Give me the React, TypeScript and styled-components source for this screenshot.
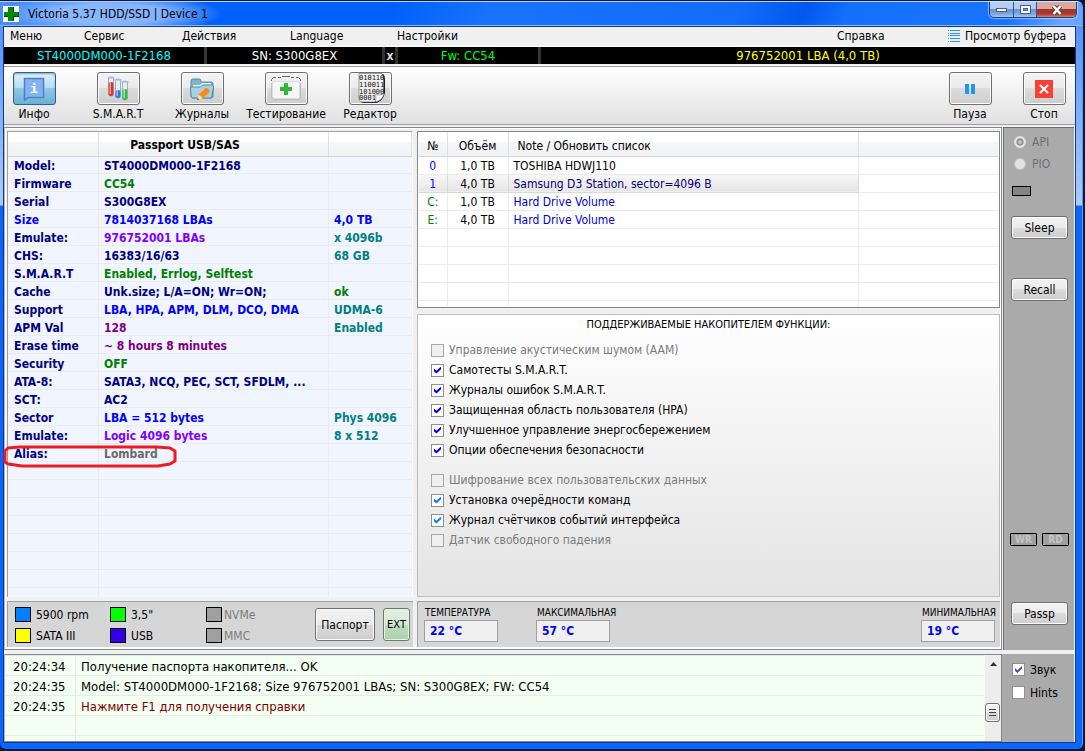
import React from "react";
import styled, { createGlobalStyle, css } from "styled-components";

const GlobalStyle = createGlobalStyle`
  * { box-sizing: border-box; }
  body {
    margin: 0;
    font-family: "DejaVu Sans Condensed", "DejaVu Sans", sans-serif;
    font-size: 12px;
    line-height: 18px;
    color: #000;
  }
  button, input { font: inherit; color: inherit; margin: 0; padding: 0; }
  table { border-collapse: collapse; border-spacing: 0; }
`;

/* ---------- window frame ---------- */

const Desktop = styled.div`
  min-height: 100vh;
  display: flex;
  padding: 1px 2px 2px 0;
  background: #02193c;
`;

const Window = styled.div`
  flex: 1;
  min-width: 0;
  display: flex;
  flex-direction: column;
  padding: 0 6px 6px 3px;
  border-top: 1px solid #b4d2ff;
  border-right: 1px solid #5c9cff;
  border-radius: 0 6px 6px 6px;
  background: linear-gradient(#4a8cf8 0, #a9cbfa 200px, #b4d2fc 203px, #0a66ff 204px, #0a66ff);
`;

const TitleBar = styled.header`
  display: flex;
  align-items: flex-start;
  justify-content: space-between;
  height: 24px;
  margin: 0 -6px 0 -3px;
  padding-left: 3px;
  border-bottom: 1px solid #8ebcff;
  border-radius: 0 6px 0 0;
  background:
    linear-gradient(115deg, transparent 0 93%, rgba(255, 255, 255, 0.35) 98%),
    linear-gradient(115deg, #4b8ffa 0, #0060fb 20%, #0060fb 36%, #1872ff 45%, #146cfd 68%, #0058ec 74%, #1470ff 78%, #1a74ff);
`;

const Title = styled.h1`
  display: flex;
  align-items: center;
  gap: 9px;
  height: 23px;
  margin: 0;
  padding-right: 20px;
  font-size: 12px;
  font-weight: normal;
  background: radial-gradient(ellipse 112px 20px at 108px 12px, rgba(160, 198, 255, 0.8) 0 50%, transparent 100%);
`;

const Caption = styled.div`
  display: flex;
  height: 16px;
  margin-right: 5px;
  border: 1px solid #20407c;
  border-top: 0;
  border-radius: 0 0 5px 5px;
  overflow: hidden;
  box-shadow: 0 0 1px 1px rgba(255, 255, 255, 0.45);
`;

const CaptionButton = styled.button<{ $close?: boolean }>`
  display: flex;
  align-items: center;
  justify-content: center;
  width: ${(p) => (p.$close ? 40 : 23)}px;
  border: 0;
  border-left: 1px solid #31548e;
  background: ${(p) =>
    p.$close
      ? "linear-gradient(#d9a9a0 0 45%, #a83228 50%, #a83a30 80%, #d88070)"
      : "linear-gradient(#b4cdf4 0 45%, #6a93d4 50%, #7ca6e6 80%, #a8c8f4)"};
  &:first-child { border-left: 0; }
`;

const Client = styled.div`
  flex: 1;
  display: flex;
  flex-direction: column;
  border: 1px solid #123a80;
  background: #f0f0f0;
`;

/* ---------- menu and drive bar ---------- */

const MenuBar = styled.nav`
  display: flex;
  align-items: center;
  height: 20px;
  padding: 0 0 2px 6px;
  border-bottom: 1px solid #fff;
`;

const MenuItem = styled.button<{ $width: number; $grow?: boolean }>`
  flex: ${(p) => (p.$grow ? "1 0" : "0 0")} ${(p) => p.$width}px;
  display: flex;
  align-items: center;
  gap: 5px;
  border: 0;
  background: none;
  text-align: left;
  white-space: nowrap;
`;

const DriveBar = styled.div`
  display: flex;
  gap: 3px;
  height: 17px;
  background: #333;
`;

const DriveCell = styled.div<{ $width?: number; $color: string }>`
  flex: ${(p) => (p.$width ? `0 0 ${p.$width}px` : "1")};
  background: #000;
  color: ${(p) => p.$color};
  font-size: 13px;
  line-height: 17px;
  text-align: center;
  white-space: nowrap;
`;

const CloseDrive = styled.button`
  flex: 0 0 10px;
  border: 0;
  background: #000;
  color: #ddd;
  font-weight: bold;
  line-height: 16px;
`;

/* ---------- toolbar ---------- */

const Toolbar = styled.div`
  display: flex;
  justify-content: space-between;
  margin-top: 2px;
  height: 59px;
  padding: 5px 1px 0 0;
  border-top: 1px solid #9a9a9a;
  border-bottom: 1px solid #a0a0a0;
  box-shadow: 0 -1px #fff;
  background: linear-gradient(#fff, #e0e0e0);
`;

const ToolGroup = styled.div<{ $gap: number }>`
  display: flex;
  gap: ${(p) => p.$gap}px;
`;

const Tool = styled.button`
  width: 60px;
  display: flex;
  flex-direction: column;
  align-items: center;
  border: 0;
  background: none;
  line-height: 18px;
  white-space: nowrap;
`;

const raised = css`
  border: 1px solid #707070;
  border-radius: 3px;
  box-shadow: inset 0 0 0 1px #fcfcfc;
  background: linear-gradient(#f3f3f3 0, #ebebeb 50%, #dcdcdc 50%, #cdcdcd);
`;

const ToolFace = styled.span<{ $active?: boolean }>`
  ${raised}
  display: flex;
  align-items: center;
  justify-content: center;
  width: 43px;
  height: 33px;
  ${(p) =>
    p.$active &&
    css`
      border-color: #2c628b;
      box-shadow: inset 0 1px 2px #7fa8c0;
      background: linear-gradient(#e0f0fa 0, #b4dcf2 50%, #8cc8ea 50%, #6cb0d8);
    `}
`;

/* ---------- main area ---------- */

const Main = styled.main`
  flex: 1;
  display: grid;
  grid-template-columns: minmax(0, 1fr) 72px;
  gap: 1px;
  margin-top: 2px;
`;

const Work = styled.div`
  display: grid;
  grid-template-columns: minmax(0, 406fr) minmax(0, 583fr);
  gap: 4px;
  padding: 3px 1px 2px 2px;
  border: 1px solid #828790;
  border-left-color: #b0b4bc;
  background: #f0f0f0;
  box-shadow: inset 1px 1px #fff, inset -1px -2px #fff;
`;

const Column = styled.section`
  min-width: 0;
  display: flex;
  flex-direction: column;
  gap: 4px;
`;

const gridLine = "#ebebeb";

const PassportBox = styled.div`
  flex: 1;
  position: relative;
  border: 1px solid #a0a0a0;
  border-right: 1px solid #fff;
  border-bottom: 0;
  background:
    linear-gradient(${gridLine}, ${gridLine}) 90px 0 / 1px 100% no-repeat,
    linear-gradient(${gridLine}, ${gridLine}) 320px 0 / 1px 100% no-repeat,
    repeating-linear-gradient(transparent 0 17px, ${gridLine} 17px 18px) 0 24px,
    #f0f5ff;
`;

const headCell = css`
  padding: 0;
  border-right: 1px solid #dedfe1;
  border-bottom: 1px solid #d5d5d5;
  background: linear-gradient(#fff 0, #fff 40%, #f5f6f7 40%, #f1f2f4);
`;

const PassportTable = styled.table`
  width: 100%;
  table-layout: fixed;
  th, td {
    height: 18px;
    padding: 0 0 0 6px;
    font-weight: bold;
    line-height: 18px;
    text-align: left;
    white-space: nowrap;
  }
  thead th {
    ${headCell}
    height: 24px;
    padding: 2px 56px 0 0;
    text-align: center;
  }
`;

const Cell = styled.td<{ $color: string }>`
  color: ${(p) => p.$color};
`;

const RowHead = styled.th<{ $color: string }>`
  color: ${(p) => p.$color};
`;

const Mark = styled.svg`
  position: absolute;
  left: -5px;
  top: 312px;
`;

const StatusBox = styled.div`
  display: flex;
  height: 46px;
  border-top: 1px solid #a0a0a0;
  border-left: 1px solid #a0a0a0;
  background: #d6d6d6;
`;

const Legend = styled.ul`
  flex: 1;
  display: grid;
  grid-template-columns: 95px 96px auto;
  grid-auto-rows: 21px;
  margin: 0;
  padding: 2px 0 0 7px;
  list-style: none;
`;

const LegendItem = styled.li<{ $color: string; $off?: boolean }>`
  display: flex;
  align-items: center;
  gap: ${(p) => (p.$off ? 2 : 5)}px;
  color: ${(p) => (p.$off ? "#7c7c7c" : "#000")};
  white-space: nowrap;
  &::before {
    content: "";
    width: 14px;
    height: 13px;
    border: 1px solid #000;
    background: ${(p) => p.$color};
  }
`;

const Buttons = styled.div`
  display: flex;
  gap: 8px;
  padding: 6px 3px 6px 0;
`;

const PushButton = styled.button<{ $width: number; $tall?: boolean; $green?: boolean }>`
  ${raised}
  width: ${(p) => p.$width}px;
  height: ${(p) => (p.$tall ? 33 : 23)}px;
  ${(p) =>
    p.$green &&
    css`
      font-size: 11px;
      border-color: #6c7c6c;
      box-shadow: inset 0 0 0 1px #e4f2e4;
      background: linear-gradient(#e4f0e4 0, #d4e8d4 50%, #c0dcc0 50%, #a8d0a8);
    `}
`;

/* ---------- drives ---------- */

const DrivesBox = styled.div`
  height: 177px;
  padding: 1px;
  border: 1px solid #828790;
  background:
    linear-gradient(${gridLine}, ${gridLine}) 29px 0 / 1px 100% no-repeat,
    linear-gradient(${gridLine}, ${gridLine}) 90px 0 / 1px 100% no-repeat,
    linear-gradient(${gridLine}, ${gridLine}) 440px 0 / 1px 100% no-repeat,
    #fff;
`;

const DrivesTable = styled.table`
  width: 100%;
  table-layout: fixed;
  th {
    ${headCell}
    height: 23px;
    padding: 3px 0 0;
    font-weight: normal;
    line-height: 18px;
    &:last-child { border-right: 0; }
  }
  td {
    height: 18px;
    padding: 2px 0 0;
    border-right: 1px solid ${gridLine};
    border-bottom: 1px solid ${gridLine};
    line-height: 15px;
    text-align: center;
    white-space: nowrap;
    &:last-child { border-right: 0; }
  }
  th:nth-child(3) { text-align: left; padding-left: 9px; }
  td:nth-child(3) { text-align: left; padding-left: 5px; }
`;

const DriveRow = styled.tr<{ $selected?: boolean }>`
  ${(p) =>
    p.$selected &&
    css`
      td:nth-child(-n + 3) {
        background: linear-gradient(#f8f8f8, #e5e5e5);
        border-color: #d9d9d9;
        border-top: 1px solid #d9d9d9;
      }
    `}
`;

/* ---------- features ---------- */

const Features = styled.fieldset`
  flex: 1;
  margin: 2px 0 0;
  padding: 2px 0 0 13px;
  border: 1px solid #bcbcbc;
  background: linear-gradient(#fff, #e4e4e4);
`;

const FeaturesTitle = styled.div`
  margin-bottom: 7px;
  padding-right: 13px;
  font-size: 11px;
  line-height: 16px;
  text-align: center;
`;

const Option = styled.label<{ $off?: boolean; $gap?: boolean }>`
  display: flex;
  align-items: center;
  gap: 5px;
  height: 20px;
  margin-top: ${(p) => (p.$gap ? 10 : 0)}px;
  color: ${(p) => (p.$off ? "#7a7a7a" : "#000")};
  white-space: nowrap;
`;

const Check = styled.input<{ $mark?: string }>`
  appearance: none;
  flex: none;
  display: flex;
  align-items: center;
  justify-content: center;
  width: 13px;
  height: 13px;
  border: 1px solid #8e8f8f;
  background: #fff;
  &:disabled { background: #f0f0f0; border-color: #a8a8a8; }
  &:checked::after {
    content: "";
    width: 7px;
    height: 7px;
    background: ${(p) => p.$mark || "#0000ff"};
    clip-path: polygon(0 30%, 35% 60%, 100% 0, 100% 40%, 35% 100%, 0 70%);
  }
`;

/* ---------- temperatures ---------- */

const TempBox = styled(StatusBox)`
  gap: 38px;
  padding: 3px 5px 0 6px;
`;

const Temp = styled.label<{ $end?: boolean }>`
  width: 74px;
  margin-left: ${(p) => (p.$end ? "auto" : 0)};
  padding-left: 1px;
  font-size: 10px;
  line-height: 15px;
  white-space: nowrap;
`;

const TempValue = styled.input`
  display: block;
  width: 74px;
  height: 22px;
  margin-left: -1px;
  padding-left: 5px;
  border: 1px solid #a0a0a0;
  background: #f0f0f0;
  color: #0000ff;
  font-size: 12px;
  font-weight: bold;
  outline: none;
`;

/* ---------- side bar ---------- */

const Side = styled.aside`
  display: flex;
  flex-direction: column;
  margin-right: 1px;
  padding: 3px 6px 25px 7px;
  border-top: 1px solid #6e6e6e;
  border-left: 1px solid #6e6e6e;
  background: #aaa;
`;

const RadioLabel = styled.label`
  display: flex;
  align-items: center;
  gap: 6px;
  height: 22px;
  padding-left: 3px;
  color: #6f6f6f;
`;

const Radio = styled.input`
  appearance: none;
  width: 12px;
  height: 12px;
  border: 1px solid #c2c2c2;
  border-radius: 50%;
  background: #e2e2e2;
  &:checked {
    border-color: #e4e4e4;
    background: radial-gradient(#ccc 0 1px, #808080 3px, #e4e4e4 4px);
  }
`;

const Led = styled.span`
  width: 19px;
  height: 10px;
  margin: 11px 0 20px 1px;
  border: 1px solid #000;
  background: #858585;
`;

const SideStack = styled.div`
  display: flex;
  flex-direction: column;
  gap: 39px;
`;

const Lamps = styled.div`
  display: flex;
  justify-content: space-between;
  margin: auto -1px 56px;
`;

const Lamp = styled.span`
  width: 27px;
  height: 13px;
  border: 1px solid #000;
  border-radius: 1px;
  background: #a0a0a0;
  color: #c4c4c4;
  font-size: 10px;
  font-weight: bold;
  line-height: 11px;
  text-align: center;
`;

/* ---------- log ---------- */

const Footer = styled.footer`
  display: grid;
  grid-template-columns: minmax(0, 1fr) 72px;
  height: 88px;
  margin-top: 4px;
  padding: 0 1px 0 0;
`;

const LogBox = styled.div`
  display: flex;
  border: 1px solid #828790;
  border-left-color: #b0b4bc;
  background: #f0fff0;
`;

const LogScroll = styled.div`
  flex: 1;
  min-width: 0;
  margin-right: 1px;
  background:
    linear-gradient(#e6ebe6, #e6ebe6) 70px 0 / 1px 100% no-repeat,
    linear-gradient(transparent 19px, #e6ebe6 19px) 0 1px / 100% 20px,
    #f2fff2;
`;

const LogTable = styled.table`
  margin-top: 2px;
  font-size: 13px;
  td {
    height: 20px;
    padding: 0 0 0 8px;
    white-space: nowrap;
  }
  td + td { padding-left: 5px; }
`;

const ScrollBar = styled.div`
  width: 16px;
  display: flex;
  flex-direction: column;
  justify-content: space-between;
  padding-bottom: 19px;
  background: #ededed;
`;

const ScrollUp = styled.button`
  height: 17px;
  border: 0;
  background: none;
  line-height: 0;
`;

const Thumb = styled.button`
  ${raised}
  width: 15px;
  height: 19px;
  line-height: 0;
`;

const SideOptions = styled.div`
  padding: 4px 0 0 10px;
  background: #aaa;
  label { height: 23px; }
`;

/* ---------- icons ---------- */

const CrossIcon = () => (
  <svg width="16" height="16" viewBox="0 0 16 16">
    <rect width="16" height="16" fill="#fff" />
    <path d="M6 1h5v5h5v5h-5v4H6v-4H1V6h5z" fill="#004d00" />
    <path d="M5 1h5v5h5v4h-5v5H5v-5H1V6h4z" fill="#008a10" />
  </svg>
);

const ListIcon = () => (
  <svg width="12" height="12" viewBox="0 0 12 12" fill="#2196f3">
    {[0, 3, 5, 8, 11].map((y) => (
      <React.Fragment key={y}>
        <rect x="0" y={y} width="1" height="1" />
        <rect x="2" y={y} width="10" height="1" />
      </React.Fragment>
    ))}
  </svg>
);

const InfoIcon = () => (
  <svg width="22" height="24" viewBox="0 0 22 24">
    <path d="M1.500 1.500h19v19H5l-3.500 2.500z" fill="#85b3f2" stroke="#4f80c0" strokeWidth="1.500" />
    <text x="11" y="16" textAnchor="middle" fontFamily="DejaVu Sans Mono" fontWeight="bold" fontSize="13" fill="#fff">i</text>
  </svg>
);

const tubes = [
  { x: 1, y: 1, h: 19, fill: 6, color: "#e0382c" },
  { x: 8, y: 3, h: 19, fill: 14, color: "#2a7de0" },
  { x: 15, y: 5, h: 19, fill: 13, color: "#36c040" },
];

const TubesIcon = () => (
  <svg width="22" height="25" viewBox="0 0 22 25">
    {tubes.map((t) => (
      <g key={t.x}>
        <rect x={t.x + 0.5} y={t.y} width="5" height={t.h} rx="2" fill="#e6eef8" stroke="#9fb0c4" />
        <rect x={t.x + 0.5} y={t.fill} width="5" height={t.y + t.h - t.fill} rx="2" fill={t.color} />
        <rect x={t.x + 1.5} y={t.fill} width="1.500" height={t.y + t.h - t.fill - 2} fill="#fff" opacity="0.5" />
        <rect x={t.x - 0.5} y={t.y} width="7" height="1.500" fill="#b0bccc" />
      </g>
    ))}
  </svg>
);

const FolderIcon = () => (
  <svg width="26" height="25" viewBox="0 0 26 25">
    <path d="M2 5q0-2 2-2h6q2 0 2 2v1h10q2 0 2 2v12q0 2-2 2H4q-2 0-2-2z" fill="#7fb4ca" stroke="#4f8ba6" />
    <path d="M4 9h7l2-2h9v4H4z" fill="#e6f2f6" />
    <path d="M1.500 11h10l2-2h9q2 0 2 2l-1.500 9q0 2-2 2H4q-2 0-2-2z" fill="#a8d2e0" stroke="#4f8ba6" />
    <path d="M8 24l1.500-5 7-7q4 0 4 4l-7 7z" fill="#f58d13" />
    <path d="M8 24l1.500-5q3 .5 4 4z" fill="#f6e2c0" />
    <path d="M8 24l.6-2 1.600 1.400z" fill="#444" />
  </svg>
);

const TestIcon = () => (
  <svg width="32" height="25" viewBox="0 0 32 25">
    <rect x="2.500" y="5.500" width="27" height="17" rx="2" fill="#f6f6f6" stroke="#dcdcdc" />
    <path d="M1.500 5V3.500l2-2H6M30.500 5V3.500l-2-2H26M8 1.500h3M12 .5h8M21 1.500h3" fill="none" stroke="#666" />
    <path d="M1.500 7v14q0 2.500 3 2.500h23q3 0 3-2.500V7" fill="none" stroke="#bdbdbd" />
    <path d="M14 7h4v4h4v4h-4v4h-4v-4h-4v-4h4z" fill="#30b83c" />
  </svg>
);

const BinaryIcon = () => (
  <svg width="31" height="31" viewBox="0 0 31 31">
    <path d="M5 1h23q2 1 2 6v13q-2 8-9 10H8q-3-1-3-4z" fill="#1c1c1c" />
    <path d="M4 .5h23q1.500 2 1.500 6V20l-9 9H6q-2-1-2-4z" fill="#f0f0f0" stroke="#666" strokeWidth="0.600" />
    <text fontFamily="DejaVu Sans Mono" fontSize="7" fill="#111">
      <tspan x="4" y="7">010110</tspan>
      <tspan x="4" y="14">110011</tspan>
      <tspan x="4" y="21">101000</tspan>
      <tspan x="4" y="27">0001</tspan>
    </text>
    <path d="M20.500 29q1-4 0-7.500 4 1.500 8.500-1-1 6.500-8.500 8.500z" fill="#fff" stroke="#777" strokeWidth="0.600" />
  </svg>
);

const PauseIcon = () => (
  <svg width="10" height="10" viewBox="0 0 10 10" fill="#2196f3">
    <rect width="4" height="10" />
    <rect x="6" width="4" height="10" />
  </svg>
);

const StopIcon = () => (
  <svg width="18" height="18" viewBox="0 0 18 18">
    <rect width="18" height="18" fill="#f44336" />
    <path d="M5 5l8 8M13 5l-8 8" stroke="#fff" strokeWidth="2" />
  </svg>
);

/* ---------- data ---------- */

const navy = "#000080";
const blue = "#0000ff";
const green = "#008000";
const violet = "#8000ff";
const purple = "#800080";
const teal = "#008080";

type PassportRow = [string, string, string, string?, string?, string?];

const passport: PassportRow[] = [
  ["Model:", "ST4000DM000-1F2168", navy],
  ["Firmware", "CC54", green],
  ["Serial", "S300G8EX", navy],
  ["Size", "7814037168 LBAs", blue, "4,0 TB", blue, blue],
  ["Emulate:", "976752001 LBAs", violet, "x 4096b", teal],
  ["CHS:", "16383/16/63", navy, "68 GB", teal],
  ["S.M.A.R.T", "Enabled, Errlog, Selftest", green],
  ["Cache", "Unk.size; L/A=ON; Wr=ON;", navy, "ok", green],
  ["Support", "LBA, HPA, APM, DLM, DCO, DMA", blue, "UDMA-6", teal],
  ["APM Val", "128", purple, "Enabled", teal],
  ["Erase time", "~ 8 hours 8 minutes", purple],
  ["Security", "OFF", green],
  ["ATA-8:", "SATA3, NCQ, PEC, SCT, SFDLM, ...", navy],
  ["SCT:", "AC2", navy],
  ["Sector", "LBA = 512 bytes", blue, "Phys 4096", teal],
  ["Emulate:", "Logic 4096 bytes", violet, "8 x 512", teal],
  ["Alias:", "Lombard", "#696969"],
];

const drives = [
  { id: "0", size: "1,0 TB", note: "TOSHIBA HDWJ110", idColor: blue, color: "#000" },
  { id: "1", size: "4,0 TB", note: "Samsung D3 Station, sector=4096 B", idColor: blue, color: navy, selected: true },
  { id: "C:", size: "1,0 TB", note: "Hard Drive Volume", idColor: green, color: "#0000d8" },
  { id: "E:", size: "4,0 TB", note: "Hard Drive Volume", idColor: green, color: "#0000d8" },
  ...[1, 2, 3, 4].map(() => ({ id: "", size: "", note: "", idColor: blue, color: "#000", selected: false })),
];

const features = [
  { text: "Управление акустическим шумом (AAM)", off: true },
  { text: "Самотесты S.M.A.R.T." },
  { text: "Журналы ошибок S.M.A.R.T." },
  { text: "Защищенная область пользователя (HPA)" },
  { text: "Улучшенное управление энергосбережением" },
  { text: "Опции обеспечения безопасности" },
  { text: "Шифрование всех пользовательских данных", off: true, gap: true },
  { text: "Установка очерёдности команд", mark: "#0080ff" },
  { text: "Журнал счётчиков событий интерфейса", mark: "#0080ff" },
  { text: "Датчик свободного падения", off: true },
];

const legend = [
  { text: "5900 rpm", color: "#0080ff" },
  { text: '3,5"', color: "#00ff00" },
  { text: "NVMe", color: "#a0a0a0", off: true },
  { text: "SATA III", color: "#ffff00" },
  { text: "USB", color: "#3300e6" },
  { text: "MMC", color: "#a0a0a0", off: true },
];

const tools = [
  { text: "Инфо", icon: <InfoIcon />, active: true },
  { text: "S.M.A.R.T", icon: <TubesIcon /> },
  { text: "Журналы", icon: <FolderIcon /> },
  { text: "Тестирование", icon: <TestIcon /> },
  { text: "Редактор", icon: <BinaryIcon /> },
];

const log = [
  { time: "20:24:34", text: "Получение паспорта накопителя... OK", color: "#000" },
  { time: "20:24:35", text: "Model: ST4000DM000-1F2168; Size 976752001 LBAs; SN: S300G8EX; FW: CC54", color: "#000" },
  { time: "20:24:35", text: "Нажмите F1 для получения справки", color: "#800000" },
];

export default function App() {
  return (
    <Desktop>
      <GlobalStyle />
      <Window>
        <TitleBar>
          <Title>
            <CrossIcon />
            Victoria 5.37 HDD/SSD | Device 1
          </Title>
          <Caption>
            <CaptionButton aria-label="Minimize">
              <svg width="11" height="4"><rect x="0.500" y="0.500" width="10" height="3" fill="#fff" stroke="#4c5f80" /></svg>
            </CaptionButton>
            <CaptionButton aria-label="Maximize">
              <svg width="11" height="9">
                <rect x="0.500" y="0.500" width="10" height="8" fill="#fff" stroke="#4c5f80" />
                <rect x="3.500" y="3.500" width="4" height="2" fill="#7ba3e0" stroke="#4c5f80" />
              </svg>
            </CaptionButton>
            <CaptionButton $close aria-label="Close">
              <svg width="12" height="10" viewBox="0 0 12 10">
                <path d="M2.500 1l7 8M9.500 1l-7 8" stroke="#5c4450" strokeWidth="4.500" />
                <path d="M2.500 1l7 8M9.500 1l-7 8" stroke="#fff" strokeWidth="2.500" />
              </svg>
            </CaptionButton>
          </Caption>
        </TitleBar>

        <Client>
          <MenuBar>
            <MenuItem $width={74}>Меню</MenuItem>
            <MenuItem $width={98}>Сервис</MenuItem>
            <MenuItem $width={108}>Действия</MenuItem>
            <MenuItem $width={107}>Language</MenuItem>
            <MenuItem $width={107} $grow>Настройки</MenuItem>
            <MenuItem $width={111}>Справка</MenuItem>
            <MenuItem $width={127}>
              <ListIcon />
              Просмотр буфера
            </MenuItem>
          </MenuBar>

          <DriveBar>
            <DriveCell $width={200} $color="#00ffff">ST4000DM000-1F2168</DriveCell>
            <DriveCell $width={175} $color="#fff">SN: S300G8EX</DriveCell>
            <CloseDrive>x</CloseDrive>
            <DriveCell $width={140} $color="#00ff00">Fw: CC54</DriveCell>
            <DriveCell $color="#ffff00">976752001 LBA (4,0 TB)</DriveCell>
          </DriveBar>

          <Toolbar>
            <ToolGroup $gap={24}>
              {tools.map((t) => (
                <Tool key={t.text}>
                  <ToolFace $active={t.active}>{t.icon}</ToolFace>
                  {t.text}
                </Tool>
              ))}
            </ToolGroup>
            <ToolGroup $gap={14}>
              <Tool><ToolFace><PauseIcon /></ToolFace>Пауза</Tool>
              <Tool><ToolFace><StopIcon /></ToolFace>Стоп</Tool>
            </ToolGroup>
          </Toolbar>

          <Main>
            <Work>
              <Column>
                <PassportBox>
                  <PassportTable>
                    <colgroup>
                      <col style={{ width: 90 }} />
                      <col style={{ width: 230 }} />
                      <col />
                    </colgroup>
                    <thead>
                      <tr><th /><th>Passport USB/SAS</th><th /></tr>
                    </thead>
                    <tbody>
                      {passport.map(([name, value, color, extra, extraColor, nameColor], i) => (
                        <tr key={i}>
                          <RowHead $color={nameColor || navy} scope="row">{name}</RowHead>
                          <Cell $color={color}>{value}</Cell>
                          <Cell $color={extraColor || navy}>{extra}</Cell>
                        </tr>
                      ))}
                    </tbody>
                  </PassportTable>
                  <Mark width="175" height="24" viewBox="0 0 175 24" fill="none" stroke="#ed1c24" strokeWidth="3" strokeLinejoin="round">
                    <path d="M17 3L5 4 2 7v11l3 2 14 2h136l12-2 5-3V7l-5-3-13-1z" />
                  </Mark>
                </PassportBox>
                <StatusBox>
                  <Legend>
                    {legend.map((l) => (
                      <LegendItem key={l.text} $color={l.color} $off={l.off}>{l.text}</LegendItem>
                    ))}
                  </Legend>
                  <Buttons>
                    <PushButton $width={60} $tall>Паспорт</PushButton>
                    <PushButton $width={27} $tall $green>EXT</PushButton>
                  </Buttons>
                </StatusBox>
              </Column>

              <Column>
                <DrivesBox>
                  <DrivesTable>
                    <colgroup>
                      <col style={{ width: 28 }} />
                      <col style={{ width: 61 }} />
                      <col style={{ width: 350 }} />
                      <col />
                    </colgroup>
                    <thead>
                      <tr><th>№</th><th>Объём</th><th>Note / Обновить список</th><th /></tr>
                    </thead>
                    <tbody>
                      {drives.map((d, i) => (
                        <DriveRow key={i} $selected={d.selected}>
                          <Cell $color={d.idColor}>{d.id}</Cell>
                          <Cell $color="#000">{d.size}</Cell>
                          <Cell $color={d.color}>{d.note}</Cell>
                          <td />
                        </DriveRow>
                      ))}
                    </tbody>
                  </DrivesTable>
                </DrivesBox>

                <Features>
                  <FeaturesTitle>ПОДДЕРЖИВАЕМЫЕ НАКОПИТЕЛЕМ ФУНКЦИИ:</FeaturesTitle>
                  {features.map((f) => (
                    <Option key={f.text} $off={f.off} $gap={f.gap}>
                      <Check type="checkbox" defaultChecked={!f.off} disabled={f.off} $mark={f.mark} />
                      {f.text}
                    </Option>
                  ))}
                </Features>

                <TempBox>
                  <Temp>ТЕМПЕРАТУРА<TempValue readOnly value="22 °C" /></Temp>
                  <Temp>МАКСИМАЛЬНАЯ<TempValue readOnly value="57 °C" /></Temp>
                  <Temp $end>МИНИМАЛЬНАЯ<TempValue readOnly value="19 °C" /></Temp>
                </TempBox>
              </Column>
            </Work>

            <Side>
              <RadioLabel><Radio type="radio" name="mode" defaultChecked disabled />API</RadioLabel>
              <RadioLabel><Radio type="radio" name="mode" disabled />PIO</RadioLabel>
              <Led />
              <SideStack>
                <PushButton $width={57}>Sleep</PushButton>
                <PushButton $width={57}>Recall</PushButton>
              </SideStack>
              <Lamps><Lamp>WR</Lamp><Lamp>RD</Lamp></Lamps>
              <PushButton $width={57}>Passp</PushButton>
            </Side>
          </Main>

          <Footer>
            <LogBox>
              <LogScroll>
                <LogTable>
                  <colgroup><col style={{ width: 71 }} /><col /></colgroup>
                  <tbody>
                    {log.map((l, i) => (
                      <tr key={i}>
                        <Cell $color="#000">{l.time}</Cell>
                        <Cell $color={l.color}>{l.text}</Cell>
                      </tr>
                    ))}
                  </tbody>
                </LogTable>
              </LogScroll>
              <ScrollBar>
                <ScrollUp aria-label="Scroll up">
                  <svg width="7" height="4"><path d="M0 4L3.500 0 7 4z" fill="#333" /></svg>
                </ScrollUp>
                <Thumb aria-label="Scroll">
                  <svg width="7" height="8"><path d="M0 .5h7M0 3.500h7M0 6.500h7" stroke="#444" /></svg>
                </Thumb>
              </ScrollBar>
            </LogBox>
            <SideOptions>
              <Option><Check type="checkbox" defaultChecked $mark="#3c5aa8" />Звук</Option>
              <Option><Check type="checkbox" />Hints</Option>
            </SideOptions>
          </Footer>
        </Client>
      </Window>
    </Desktop>
  );
}
